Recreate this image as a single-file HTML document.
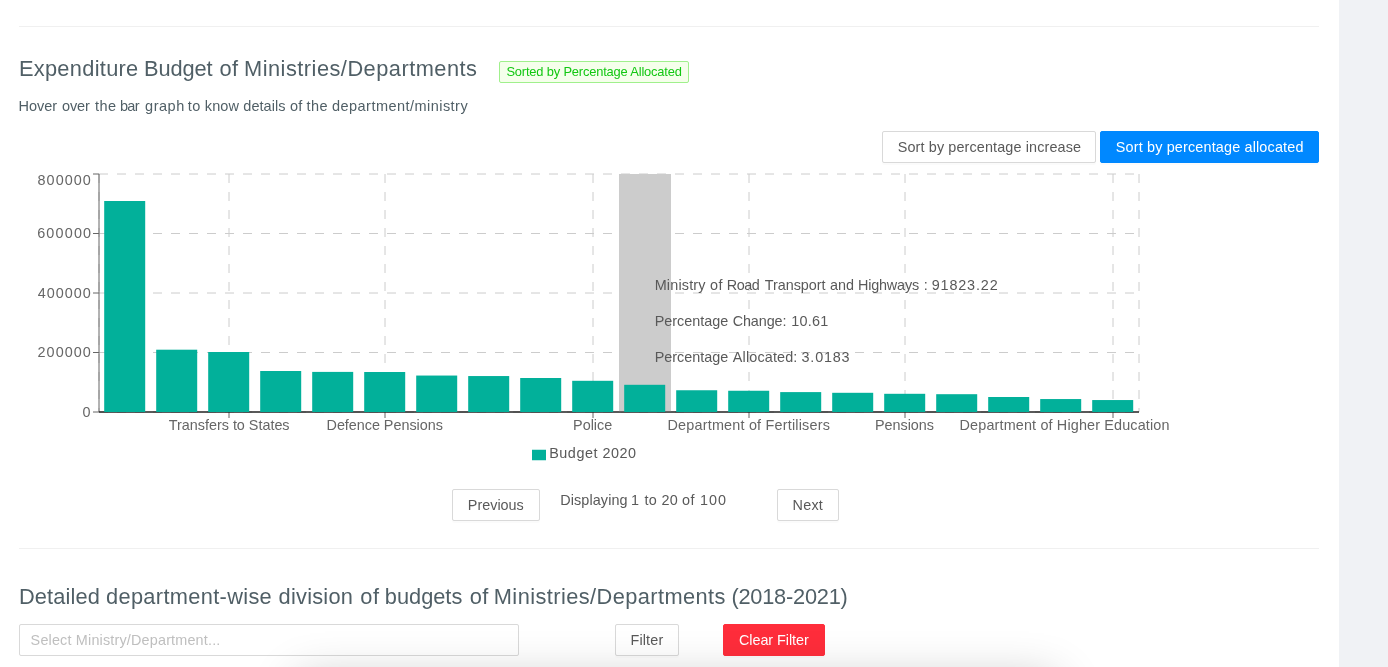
<!DOCTYPE html>
<html lang="en"><head><meta charset="utf-8"><title>Expenditure Budget of Ministries/Departments</title>
<style>
html,body{margin:0;padding:0}
body{width:1388px;height:667px;overflow:hidden;background:#f0f2f5;position:relative;font-family:"Liberation Sans",Arial,sans-serif}
.panel{position:absolute;left:0;top:0;width:1339px;height:667px;background:#fff}
.hr{position:absolute;left:19px;width:1300px;height:1px;background:#f0f0f0}
.g{margin:0;padding:0;font:inherit;display:block;position:static}
.t{position:absolute;white-space:nowrap;line-height:1}
.txt{position:absolute;left:0;top:0;width:1388px;height:667px;will-change:transform}
.box{position:absolute;box-sizing:border-box;border:1px solid #d9d9d9;border-radius:2px;background:#fff;box-shadow:0 2px 0 rgba(0,0,0,0.015)}
.chart{position:absolute;left:0;top:0}
.shadow{position:absolute;left:298px;top:680px;width:758px;height:200px;box-shadow:0 0 45px rgba(0,0,0,0.24);background:#fff}
#root{position:absolute;left:0;top:0;width:1388px;height:667px;overflow:hidden;background:#f0f2f5}
</style></head><body>
<div id="root">
<div class="panel"></div>
<div class="hr" style="top:26px"></div>
<div class="hr" style="top:548px"></div>
<div class="box" style="left:499px;top:61px;width:190px;height:22px;border-color:#a0f08c;background:#f5ffeb;box-shadow:none"></div>
<div class="box" style="left:882px;top:131px;width:214px;height:32px"></div>
<div class="box" style="left:1100px;top:131px;width:219px;height:32px;background:#0088ff;border-color:#0088ff"></div>
<svg class="chart" width="1388" height="480" viewBox="0 0 1388 480">
<g stroke="#ccc" stroke-dasharray="9 9" fill="none"><line x1="99" y1="174" x2="1139" y2="174"/><line x1="99" y1="233.5" x2="1139" y2="233.5"/><line x1="99" y1="293" x2="1139" y2="293"/><line x1="99" y1="352.5" x2="1139" y2="352.5"/><line x1="99" y1="412" x2="1139" y2="412"/><line x1="99" y1="174" x2="99" y2="412"/><line x1="229" y1="174" x2="229" y2="412"/><line x1="385" y1="174" x2="385" y2="412"/><line x1="593" y1="174" x2="593" y2="412"/><line x1="749" y1="174" x2="749" y2="412"/><line x1="905" y1="174" x2="905" y2="412"/><line x1="1113" y1="174" x2="1113" y2="412"/><line x1="1139" y1="174" x2="1139" y2="412"/></g>
<g stroke="#666" fill="none"><line x1="99" y1="412" x2="1139" y2="412"/><line x1="229" y1="412" x2="229" y2="418"/><line x1="385" y1="412" x2="385" y2="418"/><line x1="593" y1="412" x2="593" y2="418"/><line x1="749" y1="412" x2="749" y2="418"/><line x1="905" y1="412" x2="905" y2="418"/><line x1="1113" y1="412" x2="1113" y2="418"/><line x1="99" y1="174" x2="99" y2="412"/><line x1="93" y1="174" x2="99" y2="174"/><line x1="93" y1="233.5" x2="99" y2="233.5"/><line x1="93" y1="293" x2="99" y2="293"/><line x1="93" y1="352.5" x2="99" y2="352.5"/><line x1="93" y1="412" x2="99" y2="412"/></g>
<rect x="619" y="174" width="52" height="238" fill="#ccc"/>
<line x1="99" y1="412" x2="1139" y2="412" stroke="#000"/>
<g fill="#02b09a"><rect x="104.2" y="201.00" width="41" height="211.00"/><rect x="156.2" y="349.70" width="41" height="62.30"/><rect x="208.2" y="352.00" width="41" height="60.00"/><rect x="260.2" y="371.00" width="41" height="41.00"/><rect x="312.2" y="371.90" width="41" height="40.10"/><rect x="364.2" y="372.00" width="41" height="40.00"/><rect x="416.2" y="375.55" width="41" height="36.45"/><rect x="468.2" y="376.05" width="41" height="35.95"/><rect x="520.2" y="378.00" width="41" height="34.00"/><rect x="572.2" y="380.80" width="41" height="31.20"/><rect x="624.2" y="384.80" width="41" height="27.20"/><rect x="676.2" y="390.25" width="41" height="21.75"/><rect x="728.2" y="390.75" width="41" height="21.25"/><rect x="780.2" y="392.10" width="41" height="19.90"/><rect x="832.2" y="392.80" width="41" height="19.20"/><rect x="884.2" y="393.80" width="41" height="18.20"/><rect x="936.2" y="394.20" width="41" height="17.80"/><rect x="988.2" y="397.00" width="41" height="15.00"/><rect x="1040.2" y="399.05" width="41" height="12.95"/><rect x="1092.2" y="400.05" width="41" height="11.95"/></g>
<rect x="532" y="449.75" width="14" height="10.5" fill="#02b09a"/>
</svg>
<div class="box" style="left:452px;top:489px;width:88px;height:32px"></div>
<div class="box" style="left:777px;top:489px;width:62px;height:32px"></div>
<div class="box" style="left:19px;top:624px;width:500px;height:32px;box-shadow:none"></div>
<div class="box" style="left:615px;top:624px;width:64px;height:32px"></div>
<div class="box" style="left:723px;top:624px;width:102px;height:32px;background:#ff2d3b;border-color:#ff2d3b"></div>
<div class="txt"><h3 class="g"><div class="t" id="h1_0" style="left:18.89px;top:57.5px;font-size:21.8px;letter-spacing:0.304px;color:#505f66;">Expenditure</div> <div class="t" id="h1_1" style="left:144.04px;top:57.5px;font-size:21.8px;letter-spacing:-0.1px;color:#505f66;">Budget</div> <div class="t" id="h1_2" style="left:219.59px;top:57.5px;font-size:21.8px;letter-spacing:0.4px;color:#505f66;">of</div> <div class="t" id="h1_3" style="left:244.04px;top:57.5px;font-size:21.8px;letter-spacing:0.479px;color:#505f66;">Ministries/Departments</div></h3>
<div class="t" id="tag" style="left:506.38px;top:66.13px;font-size:12.9px;letter-spacing:-0.174px;color:#12c712;">Sorted by Percentage Allocated</div>
<p class="g"><div class="t" id="sub_0" style="left:18.58px;top:98.83px;font-size:14.5px;letter-spacing:-0.02px;color:#505f66;">Hover</div> <div class="t" id="sub_1" style="left:62.02px;top:98.83px;font-size:14.5px;letter-spacing:-0.152px;color:#505f66;">over</div> <div class="t" id="sub_2" style="left:94.92px;top:98.83px;font-size:14.5px;letter-spacing:0.517px;color:#505f66;">the</div> <div class="t" id="sub_3" style="left:119.93px;top:98.83px;font-size:14.5px;letter-spacing:-0.628px;color:#505f66;">bar</div> <div class="t" id="sub_4" style="left:145.09px;top:98.83px;font-size:14.5px;letter-spacing:0.513px;color:#505f66;">graph</div> <div class="t" id="sub_5" style="left:187.79px;top:98.83px;font-size:14.5px;letter-spacing:0.4px;color:#505f66;">to</div> <div class="t" id="sub_6" style="left:204.84px;top:98.83px;font-size:14.5px;letter-spacing:0.073px;color:#505f66;">know</div> <div class="t" id="sub_7" style="left:243.31px;top:98.83px;font-size:14.5px;letter-spacing:0.053px;color:#505f66;">details</div> <div class="t" id="sub_8" style="left:290.0px;top:98.83px;font-size:14.5px;letter-spacing:0.158px;color:#505f66;">of</div> <div class="t" id="sub_9" style="left:306.45px;top:98.83px;font-size:14.5px;letter-spacing:0.438px;color:#505f66;">the</div> <div class="t" id="sub_10" style="left:332.0px;top:98.83px;font-size:14.5px;letter-spacing:0.463px;color:#505f66;">department/ministry</div></p>
<div class="t" id="b1" style="left:897.77px;top:139.61px;font-size:14.4px;letter-spacing:0.123px;color:#595959;">Sort by percentage increase</div>
<div class="t" id="b2" style="left:1115.78px;top:139.61px;font-size:14.4px;letter-spacing:0.164px;color:#fff;">Sort by percentage allocated</div>
<div class="t" id="y8" style="left:37.55px;top:172.81px;font-size:14.4px;letter-spacing:1.047px;color:#666;">800000</div>
<div class="t" id="y6" style="left:37.2px;top:226.11px;font-size:14.4px;letter-spacing:1.17px;color:#666;">600000</div>
<div class="t" id="y4" style="left:37.82px;top:285.81px;font-size:14.4px;letter-spacing:1.005px;color:#666;">400000</div>
<div class="t" id="y2" style="left:37.54px;top:345.01px;font-size:14.4px;letter-spacing:1.063px;color:#666;">200000</div>
<div class="t" id="y0" style="left:82.44px;top:404.71px;font-size:14.4px;letter-spacing:0px;color:#666;">0</div>
<div class="t" id="x1" style="left:168.81px;top:417.88px;font-size:14.4px;letter-spacing:-0.015px;color:#666;">Transfers to States</div>
<div class="t" id="x2" style="left:326.54px;top:417.88px;font-size:14.4px;letter-spacing:-0.032px;color:#666;">Defence Pensions</div>
<div class="t" id="x3" style="left:573.04px;top:417.88px;font-size:14.4px;letter-spacing:0.011px;color:#666;">Police</div>
<div class="t" id="x4" style="left:667.49px;top:417.88px;font-size:14.4px;letter-spacing:0.202px;color:#666;">Department of Fertilisers</div>
<div class="t" id="x5" style="left:875.04px;top:417.88px;font-size:14.4px;letter-spacing:-0.049px;color:#666;">Pensions</div>
<div class="t" id="x6" style="left:959.54px;top:417.88px;font-size:14.4px;letter-spacing:0.152px;color:#666;">Department of Higher Education</div>
<p class="g"><div class="t" id="tt1_0" style="left:654.7px;top:278.11px;font-size:14.4px;letter-spacing:0.176px;color:#595959;">Ministry</div> <div class="t" id="tt1_1" style="left:709.91px;top:278.11px;font-size:14.4px;letter-spacing:0.495px;color:#595959;">of</div> <div class="t" id="tt1_2" style="left:726.7px;top:278.11px;font-size:14.4px;letter-spacing:-0.45px;color:#595959;">Road</div> <div class="t" id="tt1_3" style="left:764.73px;top:278.11px;font-size:14.4px;letter-spacing:-0.025px;color:#595959;">Transport</div> <div class="t" id="tt1_4" style="left:830.05px;top:278.11px;font-size:14.4px;letter-spacing:0.035px;color:#595959;">and</div> <div class="t" id="tt1_5" style="left:858.0px;top:278.11px;font-size:14.4px;letter-spacing:-0.181px;color:#595959;">Highways</div> <div class="t" id="tt1_6" style="left:923.84px;top:278.11px;font-size:14.4px;letter-spacing:0.165px;color:#595959;">:</div> <div class="t" id="tt1_7" style="left:931.72px;top:278.11px;font-size:14.4px;letter-spacing:0.848px;color:#595959;">91823.22</div></p>
<p class="g"><div class="t" id="tt2_0" style="left:654.7px;top:313.86px;font-size:14.4px;letter-spacing:-0.005px;color:#595959;">Percentage</div> <div class="t" id="tt2_1" style="left:732.7px;top:313.86px;font-size:14.4px;letter-spacing:-0.112px;color:#595959;">Change:</div> <div class="t" id="tt2_2" style="left:791.21px;top:313.86px;font-size:14.4px;letter-spacing:0.262px;color:#595959;">10.61</div></p>
<p class="g"><div class="t" id="tt3_0" style="left:654.7px;top:349.81px;font-size:14.4px;letter-spacing:-0.007px;color:#595959;">Percentage</div> <div class="t" id="tt3_1" style="left:732.85px;top:349.81px;font-size:14.4px;letter-spacing:0.141px;color:#595959;">Allocated:</div> <div class="t" id="tt3_2" style="left:801.59px;top:349.81px;font-size:14.4px;letter-spacing:0.777px;color:#595959;">3.0183</div></p>
<div class="t" id="leg" style="left:549.22px;top:445.61px;font-size:14.4px;letter-spacing:0.519px;color:#595959;">Budget 2020</div>
<div class="t" id="prev" style="left:467.81px;top:497.61px;font-size:14.4px;letter-spacing:0.002px;color:#595959;">Previous</div>
<span class="g"><div class="t" id="disp_0" style="left:560.28px;top:492.66px;font-size:14.4px;letter-spacing:0.102px;color:#595959;">Displaying</div> <div class="t" id="disp_1" style="left:630.9px;top:492.66px;font-size:14.4px;letter-spacing:0.297px;color:#595959;">1</div> <div class="t" id="disp_2" style="left:644.49px;top:492.66px;font-size:14.4px;letter-spacing:0.377px;color:#595959;">to</div> <div class="t" id="disp_3" style="left:661.39px;top:492.66px;font-size:14.4px;letter-spacing:0.4px;color:#595959;">20</div> <div class="t" id="disp_4" style="left:681.93px;top:492.66px;font-size:14.4px;letter-spacing:0.452px;color:#595959;">of</div> <div class="t" id="disp_5" style="left:700.0px;top:492.66px;font-size:14.4px;letter-spacing:0.962px;color:#595959;">100</div></span>
<div class="t" id="next" style="left:792.49px;top:497.61px;font-size:14.4px;letter-spacing:0.262px;color:#595959;">Next</div>
<h3 class="g"><div class="t" id="h2_0" style="left:18.91px;top:586.15px;font-size:21.8px;letter-spacing:0.156px;color:#505f66;">Detailed</div> <div class="t" id="h2_1" style="left:106.0px;top:586.15px;font-size:21.8px;letter-spacing:0.329px;color:#505f66;">department-wise</div> <div class="t" id="h2_2" style="left:278.6px;top:586.15px;font-size:21.8px;letter-spacing:0.225px;color:#505f66;">division</div> <div class="t" id="h2_3" style="left:360.37px;top:586.15px;font-size:21.8px;letter-spacing:0.4px;color:#505f66;">of</div> <div class="t" id="h2_4" style="left:384.81px;top:586.15px;font-size:21.8px;letter-spacing:-0.008px;color:#505f66;">budgets</div> <div class="t" id="h2_5" style="left:469.7px;top:586.15px;font-size:21.8px;letter-spacing:0.4px;color:#505f66;">of</div> <div class="t" id="h2_6" style="left:493.8px;top:586.15px;font-size:21.8px;letter-spacing:0.418px;color:#505f66;">Ministries/Departments</div> <div class="t" id="h2_7" style="left:731.39px;top:586.15px;font-size:21.8px;letter-spacing:-0.232px;color:#505f66;">(2018-2021)</div></h3>
<div class="t" id="ph" style="left:30.62px;top:633.41px;font-size:14.4px;letter-spacing:0.178px;color:#bfbfbf;">Select Ministry/Department...</div>
<div class="t" id="filt" style="left:630.49px;top:632.61px;font-size:14.4px;letter-spacing:0.147px;color:#595959;">Filter</div>
<div class="t" id="clr" style="left:738.96px;top:632.61px;font-size:14.4px;letter-spacing:-0.046px;color:#fff;">Clear Filter</div></div>
<div class="shadow"></div>
</div>
</body></html>
